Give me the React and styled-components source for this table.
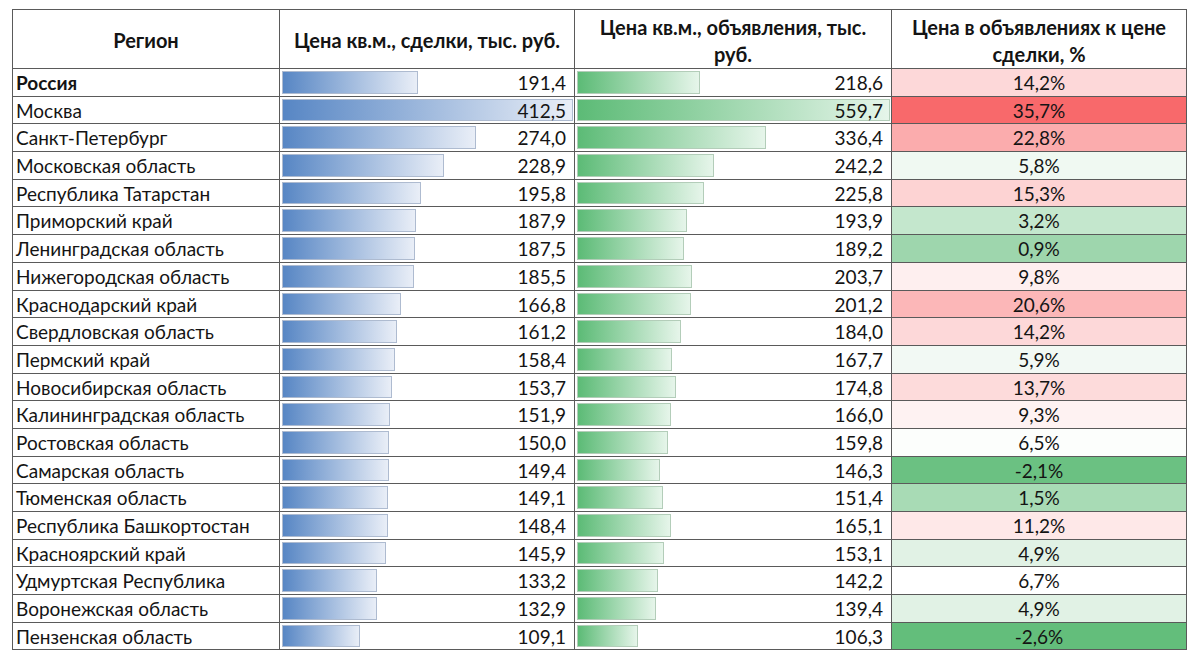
import React from "react";
import styled, { createGlobalStyle } from "styled-components";

const rows = [
  ["Россия", 191.4, 218.6, 14.2, true],
  ["Москва", 412.5, 559.7, 35.7],
  ["Санкт-Петербург", 274.0, 336.4, 22.8],
  ["Московская область", 228.9, 242.2, 5.8],
  ["Республика Татарстан", 195.8, 225.8, 15.3],
  ["Приморский край", 187.9, 193.9, 3.2],
  ["Ленинградская область", 187.5, 189.2, 0.9],
  ["Нижегородская область", 185.5, 203.7, 9.8],
  ["Краснодарский край", 166.8, 201.2, 20.6],
  ["Свердловская область", 161.2, 184.0, 14.2],
  ["Пермский край", 158.4, 167.7, 5.9],
  ["Новосибирская область", 153.7, 174.8, 13.7],
  ["Калининградская область", 151.9, 166.0, 9.3],
  ["Ростовская область", 150.0, 159.8, 6.5],
  ["Самарская область", 149.4, 146.3, -2.1],
  ["Тюменская область", 149.1, 151.4, 1.5],
  ["Республика Башкортостан", 148.4, 165.1, 11.2],
  ["Красноярский край", 145.9, 153.1, 4.9],
  ["Удмуртская Республика", 133.2, 142.2, 6.7],
  ["Воронежская область", 132.9, 139.4, 4.9],
  ["Пензенская область", 109.1, 106.3, -2.6],
];

const maxDeal = Math.max(...rows.map((r) => r[1]));
const maxAds = Math.max(...rows.map((r) => r[2]));
const pcts = rows.map((r) => r[3]);
const minPct = Math.min(...pcts);
const maxPct = Math.max(...pcts);
const midPct = [...pcts].sort((a, b) => a - b)[Math.floor(pcts.length / 2)];

const mix = (a, b, t) => a.map((v, i) => Math.round(v + (b[i] - v) * t));
const scaleColor = (v) => {
  const white = [255, 255, 255];
  const green = [99, 190, 123];
  const red = [248, 105, 107];
  const c =
    v <= midPct
      ? mix(white, green, (midPct - v) / (midPct - minPct))
      : mix(white, red, (v - midPct) / (maxPct - midPct));
  return `rgb(${c.join(",")})`;
};

const fmt = (n, digits = 1) => n.toFixed(digits).replace(".", ",");

const GlobalStyle = createGlobalStyle`
  body {
    margin: 0;
    background: #ffffff;
    font-family: Lato, "Liberation Sans", sans-serif;
    color: #141414;
  }
`;

const Page = styled.div`
  padding: 9px 14px 0 12px;
`;

const Table = styled.table`
  width: 1174px;
  table-layout: fixed;
  border-collapse: collapse;
  border: 1.5px solid #3a3a3a;
  font-size: 19px;
`;

const HeadCell = styled.th`
  height: 58px;
  padding: 0 6px;
  border: 1px solid #5a5a5a;
  font-weight: 700;
  font-size: 20px;
  line-height: 27px;
  text-align: center;
  vertical-align: middle;
`;

const HeadText = styled.div`
  padding-top: 3px;
`;

const Cell = styled.td`
  height: 26.7px;
  padding: 0;
  border: 1px solid #5a5a5a;
  background: ${(p) => p.$bg || "transparent"};
  line-height: 28px;
  white-space: nowrap;
`;

const RegionText = styled.div`
  height: 26.7px;
  padding-left: 3px;
  font-weight: ${(p) => (p.$bold ? 700 : 400)};
`;

const BarWrap = styled.div`
  position: relative;
  height: 26.7px;
`;

const Bar = styled.div`
  position: absolute;
  left: 2px;
  top: 2px;
  bottom: 2px;
  border: 1px solid ${(p) => (p.$kind === "blue" ? "#aebbd0" : "#b3cdb9")};
  background: ${(p) =>
    p.$kind === "blue"
      ? "linear-gradient(to right, #5786c4, #e9eef7)"
      : "linear-gradient(to right, #5cbb76, #e6f5ea)"};
`;

const Value = styled.div`
  position: relative;
  padding-right: 8px;
  text-align: right;
`;

const Percent = styled.div`
  height: 26.7px;
  text-align: center;
`;

const COLS = [267, 295, 317, 295];

const HEADERS = [
  "Регион",
  "Цена кв.м., сделки, тыс. руб.",
  "Цена кв.м., объявления, тыс. руб.",
  "Цена в объявлениях к цене сделки, %",
];

export default function App() {
  return (
    <Page>
      <GlobalStyle />
      <Table>
        <colgroup>
          {COLS.map((w, i) => (
            <col key={i} style={{ width: w }} />
          ))}
        </colgroup>
        <thead>
          <tr>
            {HEADERS.map((h) => (
              <HeadCell key={h}>
                <HeadText>{h}</HeadText>
              </HeadCell>
            ))}
          </tr>
        </thead>
        <tbody>
          {rows.map(([region, deal, ads, pct, bold]) => (
            <tr key={region}>
              <Cell>
                <RegionText $bold={bold}>{region}</RegionText>
              </Cell>
              <Cell>
                <BarWrap>
                  <Bar $kind="blue" style={{ width: (deal / maxDeal) * (COLS[1] - 6) }} />
                  <Value>{fmt(deal)}</Value>
                </BarWrap>
              </Cell>
              <Cell>
                <BarWrap>
                  <Bar $kind="green" style={{ width: (ads / maxAds) * (COLS[2] - 6) }} />
                  <Value>{fmt(ads)}</Value>
                </BarWrap>
              </Cell>
              <Cell $bg={scaleColor(pct)}>
                <Percent>{fmt(pct)}%</Percent>
              </Cell>
            </tr>
          ))}
        </tbody>
      </Table>
    </Page>
  );
}
